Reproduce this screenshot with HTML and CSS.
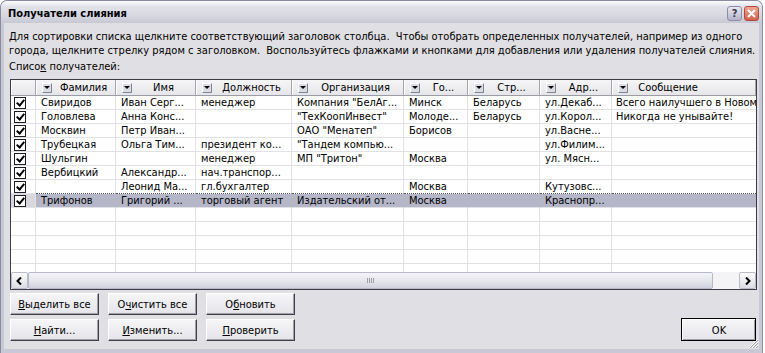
FILE: index.html
```html
<!DOCTYPE html>
<html lang="ru">
<head>
    <meta charset="UTF-8">
    <title>Получатели слияния</title>
    <link rel="stylesheet" href="styles.css">
</head>
<body>
    <div class="window">
        <div class="titlebar">
            <span class="title">Получатели слияния</span>
            <div class="caption-buttons">
                <span class="cap-btn help">?</span>
                <span class="cap-btn close"><svg width="9" height="9" viewBox="0 0 9 9"><path d="M1 1L8 8M8 1L1 8" stroke="#fff" stroke-width="2"/></svg></span>
            </div>
        </div>
        <div class="dialog">
            <p class="intro">Для сортировки списка щелкните соответствующий заголовок столбца.&nbsp; Чтобы отобрать определенных получателей, например из одного<br>города, щелкните стрелку рядом с заголовком.&nbsp; Воспользуйтесь флажками и кнопками для добавления или удаления получателей слияния.</p>
            <div class="list-label">Списо<u>к</u> получателей:</div>
            <div class="list">
                <div class="list-view">
                    <div class="row head">
                        <span class="c chk"></span>
                        <span class="c"><i class="dd"></i><span class="lbl">Фамилия</span></span>
                        <span class="c"><i class="dd"></i><span class="lbl">Имя</span></span>
                        <span class="c"><i class="dd"></i><span class="lbl">Должность</span></span>
                        <span class="c"><i class="dd"></i><span class="lbl">Организация</span></span>
                        <span class="c"><i class="dd"></i><span class="lbl">Го...</span></span>
                        <span class="c"><i class="dd"></i><span class="lbl">Стр...</span></span>
                        <span class="c"><i class="dd"></i><span class="lbl">Адр...</span></span>
                        <span class="c"><i class="dd"></i><span class="lbl msg">Сообщение</span></span>
                    </div>
                    <div class="row">
                        <span class="c chk"><i class="cb"></i></span>
                        <span class="c">Свиридов</span><span class="c">Иван Серг...</span><span class="c">менеджер</span><span class="c">Компания "БелАг...</span>
                        <span class="c">Минск</span><span class="c">Беларусь</span><span class="c">ул.Декаб...</span><span class="c last">Всего наилучшего в Новом</span>
                    </div>
                    <div class="row">
                        <span class="c chk"><i class="cb"></i></span>
                        <span class="c">Головлева</span><span class="c">Анна Конс...</span><span class="c"></span><span class="c">"ТехКоопИнвест"</span>
                        <span class="c">Молоде...</span><span class="c">Беларусь</span><span class="c">ул.Корол...</span><span class="c last">Никогда не унывайте!</span>
                    </div>
                    <div class="row">
                        <span class="c chk"><i class="cb"></i></span>
                        <span class="c">Москвин</span><span class="c">Петр Иван...</span><span class="c"></span><span class="c">ОАО "Менатеп"</span>
                        <span class="c">Борисов</span><span class="c"></span><span class="c">ул.Васне...</span><span class="c last"></span>
                    </div>
                    <div class="row">
                        <span class="c chk"><i class="cb"></i></span>
                        <span class="c">Трубецкая</span><span class="c">Ольга Тим...</span><span class="c">президент ко...</span><span class="c">"Тандем компью...</span>
                        <span class="c"></span><span class="c"></span><span class="c">ул.Филим...</span><span class="c last"></span>
                    </div>
                    <div class="row">
                        <span class="c chk"><i class="cb"></i></span>
                        <span class="c">Шульгин</span><span class="c"></span><span class="c">менеджер</span><span class="c">МП "Тритон"</span>
                        <span class="c">Москва</span><span class="c"></span><span class="c">ул. Мясн...</span><span class="c last"></span>
                    </div>
                    <div class="row">
                        <span class="c chk"><i class="cb"></i></span>
                        <span class="c">Вербицкий</span><span class="c">Александр...</span><span class="c">нач.транспор...</span><span class="c"></span>
                        <span class="c"></span><span class="c"></span><span class="c"></span><span class="c last"></span>
                    </div>
                    <div class="row before-sel">
                        <span class="c chk"><i class="cb"></i></span>
                        <span class="c"></span><span class="c">Леонид Ма...</span><span class="c">гл.бухгалтер</span><span class="c"></span>
                        <span class="c">Москва</span><span class="c"></span><span class="c">Кутузовс...</span><span class="c last"></span>
                    </div>
                    <div class="row selected">
                        <span class="c chk"><i class="cb"></i></span>
                        <span class="c">Трифонов</span><span class="c">Григорий ...</span><span class="c">торговый агент</span><span class="c">Издательский от...</span>
                        <span class="c">Москва</span><span class="c"></span><span class="c">Краснопр...</span><span class="c last"></span>
                    </div>
                    <div class="row"><span class="c chk"></span><span class="c"></span><span class="c"></span><span class="c"></span><span class="c"></span><span class="c"></span><span class="c"></span><span class="c"></span><span class="c last"></span></div>
                    <div class="row"><span class="c chk"></span><span class="c"></span><span class="c"></span><span class="c"></span><span class="c"></span><span class="c"></span><span class="c"></span><span class="c"></span><span class="c last"></span></div>
                    <div class="row"><span class="c chk"></span><span class="c"></span><span class="c"></span><span class="c"></span><span class="c"></span><span class="c"></span><span class="c"></span><span class="c"></span><span class="c last"></span></div>
                    <div class="row"><span class="c chk"></span><span class="c"></span><span class="c"></span><span class="c"></span><span class="c"></span><span class="c"></span><span class="c"></span><span class="c"></span><span class="c last"></span></div>
                    <div class="row"><span class="c chk"></span><span class="c"></span><span class="c"></span><span class="c"></span><span class="c"></span><span class="c"></span><span class="c"></span><span class="c"></span><span class="c last"></span></div>
                </div>
                <div class="hscroll">
                    <span class="sb-btn"><svg width="7" height="8" viewBox="0 0 7 8"><path d="M5 0.5L1.5 4L5 7.5" fill="none" stroke="#000" stroke-width="2"/></svg></span>
                    <span class="sb-thumb"><i class="grip-lines"></i></span>
                    <span class="sb-track"></span>
                    <span class="sb-btn"><svg width="7" height="8" viewBox="0 0 7 8"><path d="M2 0.5L5.5 4L2 7.5" fill="none" stroke="#000" stroke-width="2"/></svg></span>
                </div>
            </div>
            <div class="actions">
                <div class="btn-grid">
                    <button class="btn"><u>В</u>ыделить все</button>
                    <button class="btn">О<u>ч</u>истить все</button>
                    <button class="btn">О<u>б</u>новить</button>
                    <button class="btn"><u>Н</u>айти...</button>
                    <button class="btn"><u>И</u>зменить...</button>
                    <button class="btn"><u>П</u>роверить</button>
                </div>
                <button class="btn ok">OK</button>
            </div>
            <svg class="size-grip" width="11" height="11" viewBox="0 0 11 11">
                <path d="M10 1L1 10M10 4L4 10M10 7L7 10" stroke="#fff" stroke-width="1"/>
                <path d="M10 2L2 10M10 5L5 10M10 8L8 10" stroke="#9c9cae" stroke-width="1"/>
            </svg>
        </div>
    </div>
</body>
</html>
```

FILE: styles.css
```css
html, body {
    margin: 0;
    padding: 0;
    background: #ffffff;
}
body {
    font-family: "DejaVu Sans Condensed", "DejaVu Sans", sans-serif;
    font-size: 11px;
    color: #000;
}
.window {
    width: 763px;
    height: 353px;
    box-sizing: border-box;
    background: #c9c9d6;
    border: 1px solid #8a8aa0;
    border-bottom: none;
    border-radius: 7px 7px 0 0;
    display: flex;
    flex-direction: column;
    overflow: hidden;
}
.titlebar {
    height: 22px;
    flex: none;
    display: flex;
    align-items: center;
    justify-content: space-between;
    padding: 0 3px 0 7px;
    background: linear-gradient(#fbfbfd 0%, #e2e2ea 25%, #d6d6e0 70%, #c8c8d4 100%);
}
.title {
    font-weight: bold;
    font-size: 11px;
    margin-top: 3px;
}
.caption-buttons {
    display: flex;
    gap: 2px;
    margin-top: 3px;
}
.cap-btn {
    width: 15px;
    height: 15px;
    box-sizing: border-box;
    border-radius: 3px;
    display: flex;
    align-items: center;
    justify-content: center;
    font-weight: bold;
    font-size: 11px;
}
.help {
    border: 1px solid #8c8ca8;
    background: linear-gradient(#e8e8f2, #b4b4c8);
    color: #3a3a4a;
}
.close {
    border: 1px solid #b04a3c;
    background: linear-gradient(#f0a898, #d0604c);
}
.dialog {
    flex: 1;
    position: relative;
    margin: 0 3px 4px 3px;
    padding: 7px 2px 0 6px;
    background: #e0dfe3;
}
.intro {
    margin: 0 0 0 -1px;
    line-height: 14px;
    white-space: nowrap;
}
.list-label {
    margin: 2px 0 0 -1px;
    line-height: 14px;
}
.list {
    margin-top: 5px;
    height: 211px;
    box-sizing: border-box;
    border: 1px solid #3c3c44;
    background: #fff;
    display: flex;
    flex-direction: column;
    overflow: hidden;
}
.list-view {
    height: 192px;
    overflow: hidden;
}
.row {
    display: grid;
    grid-template-columns: 25px 80px 80px 96px 112px 64px 72px 72px 144px;
    height: 14px;
}
.c {
    box-sizing: border-box;
    height: 14px;
    border-right: 1px solid #e2e2e6;
    border-bottom: 1px solid #e2e2e6;
    padding-left: 5px;
    line-height: 13px;
    white-space: nowrap;
    overflow: hidden;
}
.c.last {
    padding-left: 4px;
    border-right: none;
}
.c.chk {
    padding-left: 3px;
}
.head {
    height: 16px;
}
.head .c {
    height: 16px;
    display: flex;
    align-items: center;
    padding-left: 6px;
    background: linear-gradient(#f6f6f8, #e6e6ea);
    border-right: 1px solid #a6a6ae;
    border-bottom: 1px solid #9c9ca6;
    box-shadow: inset 1px 0 #ffffff;
}
.dd {
    flex: none;
    width: 10px;
    height: 10px;
    box-sizing: border-box;
    border: 1px solid;
    border-color: #ffffff #84848f #84848f #ffffff;
    background: #dcdce4;
    display: flex;
    align-items: center;
    justify-content: center;
}
.dd::after {
    content: "";
    border-left: 3px solid transparent;
    border-right: 3px solid transparent;
    border-top: 3px solid #000;
}
.lbl {
    flex: 1;
    text-align: center;
    line-height: 14px;
}
.lbl.msg {
    flex: none;
    width: 80px;
}
.cb {
    display: block;
    position: relative;
    width: 10px;
    height: 10px;
    margin-top: 1px;
    border: 1px solid #1c1c24;
    background: #fff;
}
.cb::after {
    content: "";
    position: absolute;
    left: 3px;
    top: 0px;
    width: 3px;
    height: 6px;
    border-right: 2px solid #000;
    border-bottom: 2px solid #000;
    transform: rotate(40deg);
}
.before-sel .c:not(.chk) {
    border-bottom: 1px dotted #505058;
}
.selected .c {
    background: #b5b6c7;
    border-right-color: #b5b6c7;
    border-bottom-color: #e2e2e6;
}
.selected .c.chk {
    background: #d8d8dc;
    border-right-color: #e2e2e6;
}
.hscroll {
    height: 17px;
    flex: none;
    display: flex;
    background: #f4f4f7;
}
.sb-btn {
    width: 17px;
    flex: none;
    box-sizing: border-box;
    border: 1px solid #babac8;
    border-radius: 2px;
    background: linear-gradient(#fcfcfd, #dcdce6);
    display: flex;
    align-items: center;
    justify-content: center;
}
.sb-thumb {
    width: 685px;
    flex: none;
    box-sizing: border-box;
    border: 1px solid #b8b8c8;
    border-radius: 2px;
    background: linear-gradient(#f4f4f8, #e6e6ee 50%, #d2d2de);
    display: flex;
    align-items: center;
    justify-content: center;
}
.grip-lines {
    width: 7px;
    height: 5px;
    background: repeating-linear-gradient(90deg, #9c9cac 0 1px, transparent 1px 2px);
}
.sb-track {
    flex: 1;
}
.actions {
    margin-top: 3px;
    display: flex;
    justify-content: space-between;
    align-items: flex-end;
    padding-right: 1px;
}
.btn-grid {
    display: grid;
    grid-template-columns: repeat(3, 89px);
    gap: 4px 9px;
}
.btn {
    height: 22px;
    padding: 0;
    font-family: inherit;
    font-size: 11px;
    color: #000;
    border: 1px solid;
    border-color: #ffffff #404048 #404048 #ffffff;
    box-shadow: inset -1px -1px #a0a0aa;
    background: linear-gradient(#f6f6f8, #e4e4ea);
}
.ok {
    width: 75px;
    height: 23px;
    outline: 1px solid #000;
    outline-offset: -1px;
    border-width: 2px 1px 1px 2px;
}
.size-grip {
    position: absolute;
    right: 0;
    bottom: 0;
}
```
